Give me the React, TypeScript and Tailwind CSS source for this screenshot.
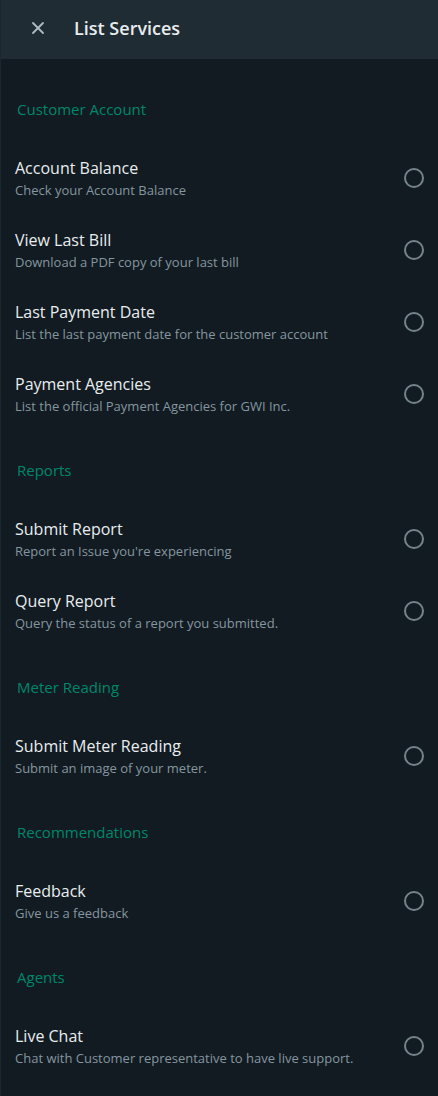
import { X } from "lucide-react";

type Service = { title: string; subtitle: string };
type Section = { name: string; items: Service[] };

const sections: Section[] = [
  {
    name: "Customer Account",
    items: [
      { title: "Account Balance", subtitle: "Check your Account Balance" },
      { title: "View Last Bill", subtitle: "Download a PDF copy of your last bill" },
      { title: "Last Payment Date", subtitle: "List the last payment date for the customer account" },
      { title: "Payment Agencies", subtitle: "List the official Payment Agencies for GWI Inc." },
    ],
  },
  {
    name: "Reports",
    items: [
      { title: "Submit Report", subtitle: "Report an Issue you're experiencing" },
      { title: "Query Report", subtitle: "Query the status of a report you submitted." },
    ],
  },
  {
    name: "Meter Reading",
    items: [{ title: "Submit Meter Reading", subtitle: "Submit an image of your meter." }],
  },
  {
    name: "Recommendations",
    items: [{ title: "Feedback", subtitle: "Give us a feedback" }],
  },
  {
    name: "Agents",
    items: [{ title: "Live Chat", subtitle: "Chat with Customer representative to have live support." }],
  },
];

export default function App() {
  return (
    <div
      className="min-h-[1096px] w-[438px] border-l border-[#1b262d] bg-[#111b21]"
      style={{ fontFamily: '"Open Sans", "Noto Sans", sans-serif' }}
    >
      <header className="flex h-[59px] items-center bg-[#202c33] pb-[3px]">
        <button className="ml-[26px] flex h-[22px] w-[22px] items-center justify-center text-[#aebac1]">
          <X className="h-[20px] w-[20px]" strokeWidth={2.2} />
        </button>
        <h1 className="ml-[25px] text-[18px] font-semibold text-[#e9edef]">List Services</h1>
      </header>

      <div className="pt-[9px]">
        {sections.map((section) => (
          <div key={section.name}>
            <div className="pl-[16px] pt-[31px] pb-[22px] text-[15px] leading-[20px] text-[#00876a]">
              {section.name}
            </div>
            {section.items.map((item) => (
              <label key={item.title} className="flex h-[72px] items-start pl-[14px] pr-[14px] pt-[16px]">
                <div className="flex-1">
                  <div className="text-[16px] leading-[22px] text-[#e9edef]">{item.title}</div>
                  <div className="mt-[2px] text-[13px] leading-[18px] text-[#8696a0]">{item.subtitle}</div>
                </div>
                <span className="mt-[11px] h-[20px] w-[20px] rounded-full border-2 border-[#75838c]" />
              </label>
            ))}
          </div>
        ))}
      </div>
    </div>
  );
}
